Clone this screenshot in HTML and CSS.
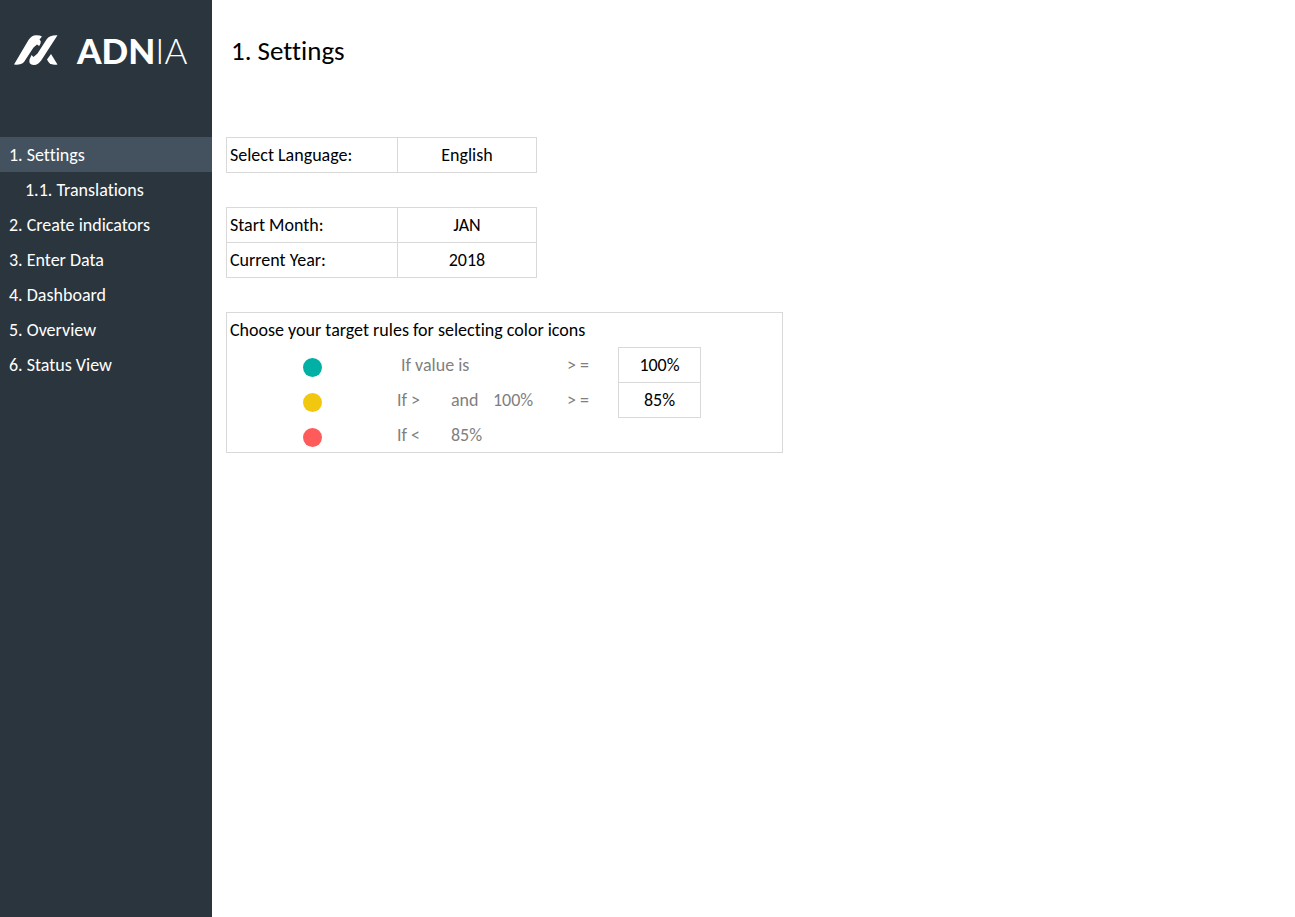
FILE: index.html
```html
<!DOCTYPE html>
<html lang="en">
<head>
<meta charset="utf-8">
<meta name="viewport" content="width=device-width, initial-scale=1">
<title>Adnia - Settings</title>
<link rel="stylesheet" href="styles.css">
</head>
<body>
<div class="app">
  <aside class="sidebar">
    <div class="brand">
      <svg class="brand-mark" viewBox="0 0 44 31" aria-hidden="true">
        <path d="M0 29.500L14.500 5Q17.500 0.500 22 0.300Q26 0.200 28 1.500L25.500 4.500Q27.500 6 26.500 8.500L25.200 11L23 9.500L19.500 12.500L10 27Q7 30.200 0 29.500Z"/>
        <path d="M43.500 0.300L27.500 25Q24 30.300 19.500 30Q14.500 29.500 15.500 24.500L17.500 20L19.500 22L23.500 18.500L32.500 4.500Q35.500 0 43.500 0.300Z"/>
        <path d="M37 19L43.500 29.500Q37 30.500 34.500 27L33 24.500Z"/>
      </svg>
      <span class="brand-name">ADN<span class="brand-light">IA</span></span>
    </div>
    <nav class="nav">
      <a class="nav-link active" href="#settings" aria-current="page">1. Settings</a>
      <a class="nav-link sub" href="#translations">1.1. Translations</a>
      <a class="nav-link" href="#indicators">2. Create indicators</a>
      <a class="nav-link" href="#data">3. Enter Data</a>
      <a class="nav-link" href="#dashboard">4. Dashboard</a>
      <a class="nav-link" href="#overview">5. Overview</a>
      <a class="nav-link" href="#status">6. Status View</a>
    </nav>
  </aside>
  <main class="main">
    <h1 class="title">1. Settings</h1>
    <form class="settings">
      <div class="fields">
        <div class="field">
          <label class="label" for="language">Select Language:</label>
          <select class="control" id="language"><option>English</option></select>
        </div>
      </div>
      <div class="fields">
        <div class="field">
          <label class="label" for="month">Start Month:</label>
          <select class="control" id="month"><option>JAN</option></select>
        </div>
        <div class="field">
          <label class="label" for="year">Current Year:</label>
          <input class="control" id="year" type="text" value="2018">
        </div>
      </div>
      <section class="rules">
        <h2 class="rules-title">Choose your target rules for selecting color icons</h2>
        <div class="rule">
          <span class="dot green"></span>
          <label class="wide" for="green-min">If value is</label>
          <span>&gt; =</span>
          <input class="limit" id="green-min" type="text" value="100%">
        </div>
        <div class="rule">
          <span class="dot yellow"></span>
          <label for="yellow-min">If &gt;</label>
          <span>and</span>
          <span>100%</span>
          <span>&gt; =</span>
          <input class="limit" id="yellow-min" type="text" value="85%">
        </div>
        <div class="rule">
          <span class="dot red"></span>
          <span>If &lt;</span>
          <span>85%</span>
        </div>
      </section>
    </form>
  </main>
</div>
</body>
</html>
```
FILE: styles.css
```css
* {
  box-sizing: border-box;
}

body {
  margin: 0;
  background: #fff;
  color: #000;
  font-family: Carlito, Lato, sans-serif;
  font-size: 18px;
  font-variant-ligatures: none;
  line-height: 20px;
}

.app {
  display: flex;
  min-height: 100vh;
}

.sidebar {
  flex: 0 0 212px;
  background: #2b353e;
  color: #fff;
}

.brand {
  display: flex;
  align-items: center;
  gap: 19px;
  height: 137px;
  padding: 0 0 37px 14px;
}

.brand-mark {
  width: 44px;
  height: 31px;
  fill: #fff;
}

.brand-name {
  font-family: Lato, sans-serif;
  font-size: 35px;
  font-weight: 900;
  line-height: 38px;
}

.brand-light {
  font-weight: 300;
}

.nav {
  display: flex;
  flex-direction: column;
}

.nav-link {
  padding: 8px 9px 7px;
  color: #fff;
  text-decoration: none;
}

.nav-link.active {
  background: #44525f;
}

.nav-link.sub {
  padding-left: 25px;
}

.main {
  flex: 1;
  min-width: 0;
  padding: 0 14px;
}

.title {
  display: flex;
  align-items: center;
  height: 137px;
  margin: 0;
  padding: 0 5px 36px;
  font-size: 27px;
  font-weight: 400;
  line-height: 32px;
}

.settings {
  display: flex;
  flex-direction: column;
  gap: 34px;
}

.fields {
  width: 100%;
  max-width: 311px;
  border: 1px solid #d9d9d9;
}

.field {
  display: grid;
  grid-template-columns: 11fr 9fr;
}

.field + .field {
  border-top: 1px solid #d9d9d9;
}

.label {
  padding: 7px 3px;
}

.control {
  min-width: 0;
  height: 34px;
  margin: 0;
  padding: 0;
  border: 0;
  border-left: 1px solid #d9d9d9;
  border-radius: 0;
  background: #fff;
  color: #000;
  font: inherit;
  text-align: center;
  text-align-last: center;
  appearance: none;
}

.rules {
  width: 100%;
  max-width: 557px;
  border: 1px solid #d9d9d9;
}

.rules-title {
  margin: 0;
  padding: 7px 3px;
  font-size: inherit;
  font-weight: 400;
}

.rule {
  display: grid;
  grid-template-columns: 170px 54px 42px 74px 51px 83px;
  align-items: center;
  height: 35px;
  color: #7f7f7f;
}

.wide {
  grid-column: span 3;
  padding-left: 4px;
}

.dot {
  width: 19px;
  height: 19px;
  margin-top: 5px;
  border-radius: 50%;
  justify-self: center;
}

.green {
  background: #00b0a5;
}

.yellow {
  background: #f1c70f;
}

.red {
  background: #ff5b5b;
}

.limit {
  align-self: start;
  width: 100%;
  height: 36px;
  margin: 0;
  padding: 0;
  border: 1px solid #d9d9d9;
  border-radius: 0;
  background: #fff;
  color: #000;
  font: inherit;
  text-align: center;
}
```
